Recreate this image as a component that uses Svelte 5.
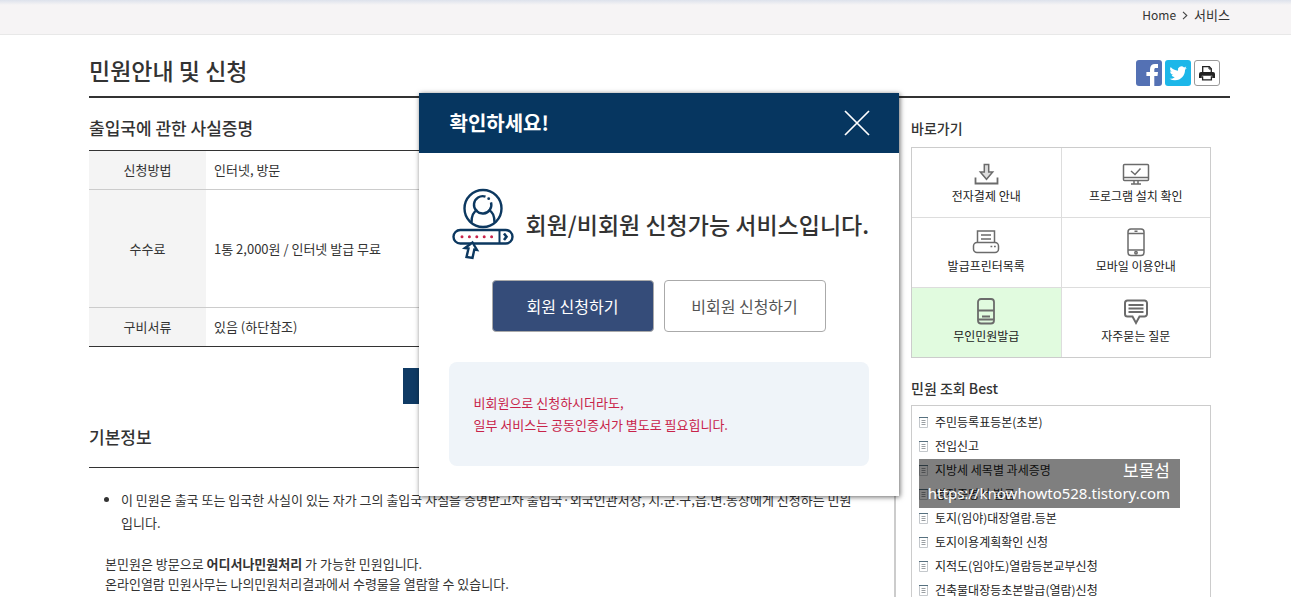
<script lang="ts">
  type Shortcut = { icon: string; label: string; active?: boolean };

  const info = [
    { name: "신청방법", value: "인터넷, 방문" },
    { name: "수수료", value: "1통 2,000원 / 인터넷 발급 무료", tall: true },
    { name: "구비서류", value: "있음 (하단참조)" },
  ];

  const shortcuts: Shortcut[] = [
    { icon: "download", label: "전자결제 안내" },
    { icon: "monitor", label: "프로그램 설치 확인" },
    { icon: "printer", label: "발급프린터목록" },
    { icon: "mobile", label: "모바일 이용안내" },
    { icon: "kiosk", label: "무인민원발급", active: true },
    { icon: "faq", label: "자주묻는 질문" },
  ];

  const best = [
    "주민등록표등본(초본)",
    "전입신고",
    "지방세 세목별 과세증명",
    "병적증명서 발급",
    "토지(임야)대장열람.등본",
    "토지이용계획확인 신청",
    "지적도(임야도)열람등본교부신청",
    "건축물대장등초본발급(열람)신청",
  ];

  let open = $state(true);
</script>

<div class="page">
  <nav class="crumbs">
    <a href="#home">Home</a>
    <svg width="6" height="9" viewBox="0 0 6 9"><path d="M1 .8 4.8 4.5 1 8.2" fill="none" stroke="#444" stroke-width="1.1" /></svg>
    <a href="#service" class="here">서비스</a>
  </nav>

  <div class="wrap">
    <header class="title">
      <h1>민원안내 및 신청</h1>
      <div class="share">
        <a href="#facebook" aria-label="페이스북">
          <svg width="26" height="26" viewBox="0 0 26 26">
            <rect width="26" height="26" rx="3" fill="#5471b4" />
            <path d="M14 26V16h-3.600v-4H14V9.200C14 5.800 16 4 19 4h3v4h-2c-1.300 0-1.700.6-1.700 1.700V12H22l-.5 4h-3.200v10z" fill="#fff" />
          </svg>
        </a>
        <a href="#twitter" aria-label="트위터">
          <svg width="26" height="26" viewBox="0 0 26 26">
            <rect width="26" height="26" rx="3" fill="#1cb7e9" />
            <path transform="translate(4.500 4.700) scale(.72)" d="M23.950 4.570a10 10 0 0 1-2.820.780 4.960 4.960 0 0 0 2.160-2.730c-.95.560-2 .96-3.130 1.190a4.920 4.920 0 0 0-8.380 4.480C7.690 8.100 4.070 6.130 1.640 3.160a4.920 4.920 0 0 0 1.520 6.570 4.900 4.900 0 0 1-2.230-.62v.06a4.920 4.920 0 0 0 3.950 4.830 5 5 0 0 1-2.210.08 4.940 4.940 0 0 0 4.600 3.420A9.870 9.870 0 0 1 0 19.540a14 14 0 0 0 7.550 2.210c9.050 0 14-7.500 14-13.980l-.02-.64a10 10 0 0 0 2.420-2.560z" fill="#fff" />
          </svg>
        </a>
        <button class="print" aria-label="인쇄">
          <svg width="16" height="15" viewBox="0 0 16 15">
            <path d="M3.700 6.500V.7h6.600l2 2v3.800" fill="none" stroke="#222" stroke-width="1.300" />
            <path d="M10 .7v2.300h2.300" fill="none" stroke="#222" />
            <path d="M2 6h12a2 2 0 0 1 2 2v4h-2.800V9.800H2.800V12H0V8a2 2 0 0 1 2-2z" fill="#222" />
            <path d="M3.600 10.200v3.600h8.800v-3.600" fill="#fff" stroke="#222" stroke-width="1.300" />
          </svg>
        </button>
      </div>
    </header>

    <div class="cols">
      <main>
        <h2>출입국에 관한 사실증명</h2>
        <table>
          <tbody>
            {#each info as row}
              <tr class:tall={row.tall}>
                <th scope="row">{row.name}</th>
                <td>{row.value}</td>
              </tr>
            {/each}
          </tbody>
        </table>
        <button class="apply" aria-label="신청하기" onclick={() => (open = true)}></button>

        <h2 class="basic">기본정보</h2>
        <div class="detail">
          <ul>
            <li>
              이 민원은 출국 또는 입국한 사실이 있는 자가 그의 출입국 사실을 증명받고자 출입국·외국인관서장, 시.군.구,읍.면.동장에게 신청하는 민원입니다.
            </li>
          </ul>
          <p>
            본민원은 방문으로 <b>어디서나민원처리</b> 가 가능한 민원입니다.<br />
            온라인열람 민원사무는 나의민원처리결과에서 수령물을 열람할 수 있습니다.
          </p>
        </div>
      </main>

      <aside>
        <h3>바로가기</h3>
        <div class="shortcuts">
          {#each shortcuts as item}
            <a href="#{item.icon}" class:active={item.active}>
              <svg width="30" height="30" viewBox="0 0 30 30" fill="none" stroke="#6b6b6b" stroke-width="1.500">
                {#if item.icon === "download"}
                  <path d="M4.500 19.500v6h22v-6" stroke-width="1.800" />
                  <path d="M13.300 6.500h4.400V14h4l-6.200 7.300L9.300 14h4z" fill="#ddd" />
                {:else if item.icon === "monitor"}
                  <rect x="2.500" y="6.500" width="25" height="16" rx="1" />
                  <path d="M2.500 19.500h25M13 22.500V26M17 22.500V26M10 26h10" />
                  <path d="m10 13 4 3.500 5.500-6" />
                {:else if item.icon === "printer"}
                  <path d="M6.500 14V3h17v11M10 7h10M10 11h10" />
                  <rect x="2.500" y="14.500" width="25" height="10" rx="3.500" fill="#fff" />
                  <path d="M19.500 18.500h1.800M23 18.500h1.800" />
                {:else if item.icon === "mobile"}
                  <rect x="7" y="1" width="16" height="26.500" rx="3" />
                  <path d="M7 5.500h16M7 22h16M13.500 3.300h3" />
                  <circle cx="15" cy="24.700" r="1.200" />
                {:else if item.icon === "kiosk"}
                  <rect x="7" y="1" width="16" height="24.500" rx="3" stroke-width="1.800" />
                  <path d="M7 12.500h16M7 21.500h16M11 18.500h8" stroke-width="1.800" />
                {:else}
                  <path d="M6.500 2.500h17A2.500 2.500 0 0 1 26 5v11a2.500 2.500 0 0 1-2.500 2.500h-5L15 25l-3.500-6.500h-5A2.500 2.500 0 0 1 4 16V5a2.500 2.500 0 0 1 2.500-2.500z" stroke-width="2" />
                  <path d="M7.500 7h15M7.500 10.500h15M7.500 14h15" stroke-width="1.800" />
                {/if}
              </svg>
              <span>{item.label}</span>
            </a>
          {/each}
        </div>

        <h3>민원 조회 Best</h3>
        <div class="best">
          <ol>
            {#each best as name}
              <li>
                <svg width="9" height="11" viewBox="0 0 9 11">
                  <path d="M.5 1v9.500h8V1" fill="none" stroke="#c4c8cc" />
                  <path d="M0 .5h9" stroke="#56707f" />
                  <path d="M2.500 3.500h4M2.500 5.500h4M2.500 7.500h4" stroke="#9a9fa3" />
                </svg>
                <a href="#best">{name}</a>
              </li>
            {/each}
          </ol>
          <div class="mark">
            <span class="owner">보물섬</span>
            <span>https://knowhowto528.tistory.com</span>
          </div>
        </div>
      </aside>
    </div>
  </div>

  {#if open}
    <div class="modal" role="dialog" aria-labelledby="modal-title">
      <div class="modal-head">
        <h2 id="modal-title">확인하세요!</h2>
        <button aria-label="닫기" onclick={() => (open = false)}>
          <svg width="26" height="26" viewBox="0 0 26 26"><path d="m1 1 24 24M25 1 1 25" stroke="#fff" stroke-width="1.700" /></svg>
        </button>
      </div>
      <div class="modal-body">
        <div class="message">
          <svg width="62" height="72" viewBox="0 0 62 72" fill="none" stroke="#0c3860" stroke-width="2.400">
            <circle cx="31" cy="20.500" r="18.500" />
            <path d="M33.500 8.600A8.700 8.700 0 1 0 39 14.300" />
            <circle cx="36.700" cy="10.700" r="1.400" fill="#0c3860" stroke="none" />
            <path d="M19.500 34.500c0-6.500 2.200-11 6-12.500M42.500 34.500c0-6.500-2.200-11-6-12.500" />
            <rect x="1.500" y="42" width="59" height="13.500" rx="6.750" />
            <path d="M47.500 42v13.500" stroke-width="2" />
            <path d="m52 45.500 2.500 3.200-2.500 3.300" stroke-width="2.600" />
            <path d="M10 48.700h32" stroke="#c8234a" stroke-width="3" stroke-linecap="round" stroke-dasharray="0 7.400" />
            <path d="m20.500 54.500 4.500 7.500-2.700-.4-1.800 8.400-6-1 2-8.500-3.500-.5z" fill="#fff" stroke-width="2.400" />
          </svg>
          <strong>회원/비회원 신청가능 서비스입니다.</strong>
        </div>
        <div class="actions">
          <button class="primary">회원 신청하기</button>
          <button>비회원 신청하기</button>
        </div>
        <p class="notice">
          비회원으로 신청하시더라도,<br />
          일부 서비스는 공동인증서가 별도로 필요힙니다.
        </p>
      </div>
    </div>
  {/if}
</div>

<style>
  :global(body) {
    background: #fff;
  }
  .page {
    position: relative;
    height: 100vh;
    overflow: hidden;
    font-family: "Noto Sans CJK KR", sans-serif;
    font-size: 13px;
    line-height: 20px;
    color: #333;
  }
  h1, h2, h3, p, ul, ol { margin: 0; padding: 0; }
  ol { list-style: none; }
  a { color: inherit; text-decoration: none; }
  button { font: inherit; cursor: pointer; padding: 0; }
  svg { display: block; flex-shrink: 0; }

  .crumbs {
    display: flex;
    align-items: center;
    justify-content: flex-end;
    gap: 6px;
    height: 35px;
    padding: 0 61px 4px 89px;
    box-sizing: border-box;
    border-bottom: 1px solid #e8e8e8;
    background: linear-gradient(#dde2ec, #f6f4f5 5px);
    font-size: 12px;
  }
  .here { font-size: 13px; }
  .wrap { padding: 0 61px 0 89px; }
  .title {
    display: flex;
    align-items: center;
    justify-content: space-between;
    height: 61px;
    border-bottom: 2px solid #333;
  }
  h1 {
    font-size: 23px;
    line-height: 34px;
    font-weight: 500;
    padding: 18px 0 10px;
  }
  .share { display: flex; gap: 3px; padding: 15px 10px 0 0; }
  .print {
    width: 26px;
    height: 26px;
    display: grid;
    place-items: center;
    background: #fff;
    border: 1px solid #999;
    border-radius: 3px;
  }

  .cols { display: flex; gap: 15px; padding-right: 19px; }
  main { flex: 1; min-width: 0; }
  h2 {
    font-size: 17px;
    line-height: 24px;
    font-weight: 500;
    padding: 18px 0 10px;
  }
  table {
    width: 100%;
    border-spacing: 0;
    border-top: 1px solid #333;
    border-bottom: 1px solid #333;
  }
  th, td { height: 38px; padding: 0; }
  tr + tr > * { border-top: 1px solid #ccc; }
  .tall th, .tall td { height: 117px; }
  th {
    width: 117px;
    background: #f4f4f4;
    font-weight: 400;
  }
  td { padding-left: 8px; }
  .apply {
    display: block;
    width: 180px;
    height: 36px;
    margin: 21px auto 0;
    border: 0;
    background: #0f3a64;
  }
  .basic { padding: 21px 0 18px; border-bottom: 1px solid #333; }
  .detail {
    padding: 20px 32px 40px 16px;
    border-right: 2px solid #ccc;
    height: 140px;
  }
  ul { padding-left: 16px; line-height: 23px; }
  .detail p { padding-top: 20px; }

  aside { width: 300px; }
  h3 {
    font-size: 14px;
    line-height: 20px;
    font-weight: 500;
    padding: 20px 0 9px;
  }
  .shortcuts {
    display: grid;
    grid-template-columns: 1fr 1fr;
    gap: 1px;
    border: 1px solid #ccc;
    background: #ddd;
  }
  .shortcuts a {
    display: flex;
    flex-direction: column;
    align-items: center;
    height: 69px;
    padding-top: 10px;
    box-sizing: border-box;
    background: #fff;
    font-size: 12px;
    line-height: 16px;
    color: #222;
  }
  .shortcuts a.active { background: #e1fbdf; }
  .shortcuts + h3 { padding: 20px 0 7px; }
  .best {
    position: relative;
    padding: 4px 7px;
    border: 1px solid #ccc;
    font-size: 12px;
    line-height: 24px;
    color: #222;
  }
  .best li { display: flex; align-items: center; gap: 7px; }
  .mark {
    position: absolute;
    left: 7px;
    top: 53px;
    width: 261px;
    height: 49px;
    padding: 1px 10px 0 0;
    box-sizing: border-box;
    display: flex;
    flex-direction: column;
    align-items: flex-end;
    background: rgba(0, 0, 0, 0.5);
    color: #fff;
    font-family: "Noto Sans", "Noto Sans CJK KR", sans-serif;
    font-size: 15px;
    line-height: 22px;
    white-space: nowrap;
  }
  .owner { font-size: 17px; }

  .modal {
    position: absolute;
    top: 93px;
    left: calc(50% - 227px);
    width: 480px;
    background: #fff;
    box-shadow: 1px 1px 5px rgba(0, 0, 0, 0.6);
  }
  .modal-head {
    display: flex;
    align-items: center;
    justify-content: space-between;
    height: 60px;
    padding: 0 29px 0 31px;
    background: #063660;
    color: #fff;
  }
  .modal-head h2 { padding: 0; font-size: 20px; font-weight: 700; }
  .modal-head button { border: 0; background: none; }
  .modal-body { padding: 35px 30px 30px; }
  .message {
    display: flex;
    align-items: center;
    gap: 12px;
    padding-left: 3px;
  }
  .message strong {
    font-size: 23px;
    line-height: 34px;
    font-weight: 500;
    white-space: nowrap;
  }
  .actions {
    display: flex;
    justify-content: center;
    gap: 10px;
    padding: 20px 0 30px;
  }
  .actions button {
    width: 162px;
    height: 52px;
    border: 1px solid #aaa;
    border-radius: 4px;
    background: #fff;
    font-size: 16px;
    color: #555;
  }
  .actions .primary { background: #354c79; color: #fff; }
  .notice {
    padding: 30px 25px;
    border-radius: 8px;
    background: #eff4f9;
    line-height: 22px;
    color: #c8234a;
  }
</style>
